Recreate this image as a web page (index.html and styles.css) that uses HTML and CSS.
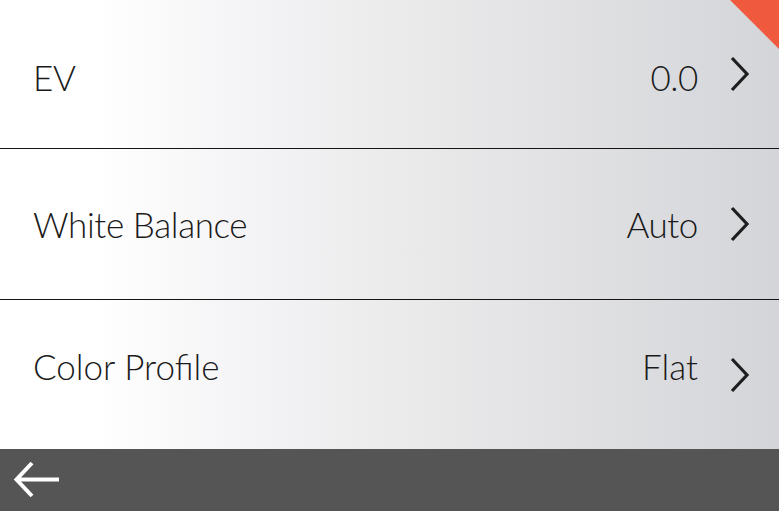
FILE: index.html
```html
<!DOCTYPE html>
<html>
<head>
<meta charset="utf-8">
<link rel="stylesheet" href="styles.css">
</head>
<body>
<div class="screen">
  <div class="list">
    <div class="row row-ev">
      <span class="label">EV</span>
      <span class="value">0.0</span>
      <svg class="chev" width="20" height="36" viewBox="0 0 20 36"><polyline points="2,2 17,18 2,34" fill="none" stroke="#1e1e1e" stroke-width="3.2"/></svg>
    </div>
    <div class="row row-wb">
      <span class="label">White Balance</span>
      <span class="value">Auto</span>
      <svg class="chev" width="20" height="36" viewBox="0 0 20 36"><polyline points="2,2 17,18 2,34" fill="none" stroke="#1e1e1e" stroke-width="3.2"/></svg>
    </div>
    <div class="row row-cp">
      <span class="label">Color Profile</span>
      <span class="value">Flat</span>
      <svg class="chev" width="20" height="36" viewBox="0 0 20 36"><polyline points="2,2 17,18 2,34" fill="none" stroke="#1e1e1e" stroke-width="3.2"/></svg>
    </div>
  </div>
  <div class="bar">
    <svg class="back" width="48" height="40" viewBox="0 0 48 40"><path d="M46 19.5 H4 M19 3 L3.5 19.5 L19 36" fill="none" stroke="#fff" stroke-width="4" stroke-linejoin="miter"/></svg>
  </div>
  <div class="corner"></div>
</div>
</body>
</html>
```
FILE: styles.css
```css
html, body {
  margin: 0;
  padding: 0;
}
.screen {
  position: relative;
  width: 779px;
  height: 511px;
  overflow: hidden;
  font-family: Lato, "Open Sans", sans-serif;
  font-weight: 300;
  color: #1a1a1a;
  background: linear-gradient(to right, #ffffff 12%, #f5f5f7 30%, #e9e9ea 55%, #d4d5d9 100%);
  display: flex;
  flex-direction: column;
}
.list {
  height: 449px;
  display: flex;
  flex-direction: column;
}
.row {
  display: flex;
  align-items: center;
  padding: 0 29px 0 33px;
  border-bottom: 1px solid #151515;
  font-size: 35px;
  letter-spacing: -0.4px;
}
.row-ev {
  height: 148px;
}
.row-ev .label,
.row-ev .value {
  margin-top: 6px;
}
.row-wb {
  height: 150px;
}
.row-cp {
  height: 149px;
  border-bottom: none;
  letter-spacing: 0;
}
.row-cp .label,
.row-cp .value {
  margin-bottom: 18px;
}
.label {
  flex: 1;
}
.value {
  margin-right: 32px;
}
.chev {
  display: block;
}
.bar {
  height: 62px;
  background: #555556;
  display: flex;
  align-items: center;
  padding-left: 13px;
}
.back {
  display: block;
}
.corner {
  position: absolute;
  top: 0;
  right: 0;
  width: 0;
  height: 0;
  border-top: 49px solid #ef5a3e;
  border-left: 49px solid transparent;
}
```
